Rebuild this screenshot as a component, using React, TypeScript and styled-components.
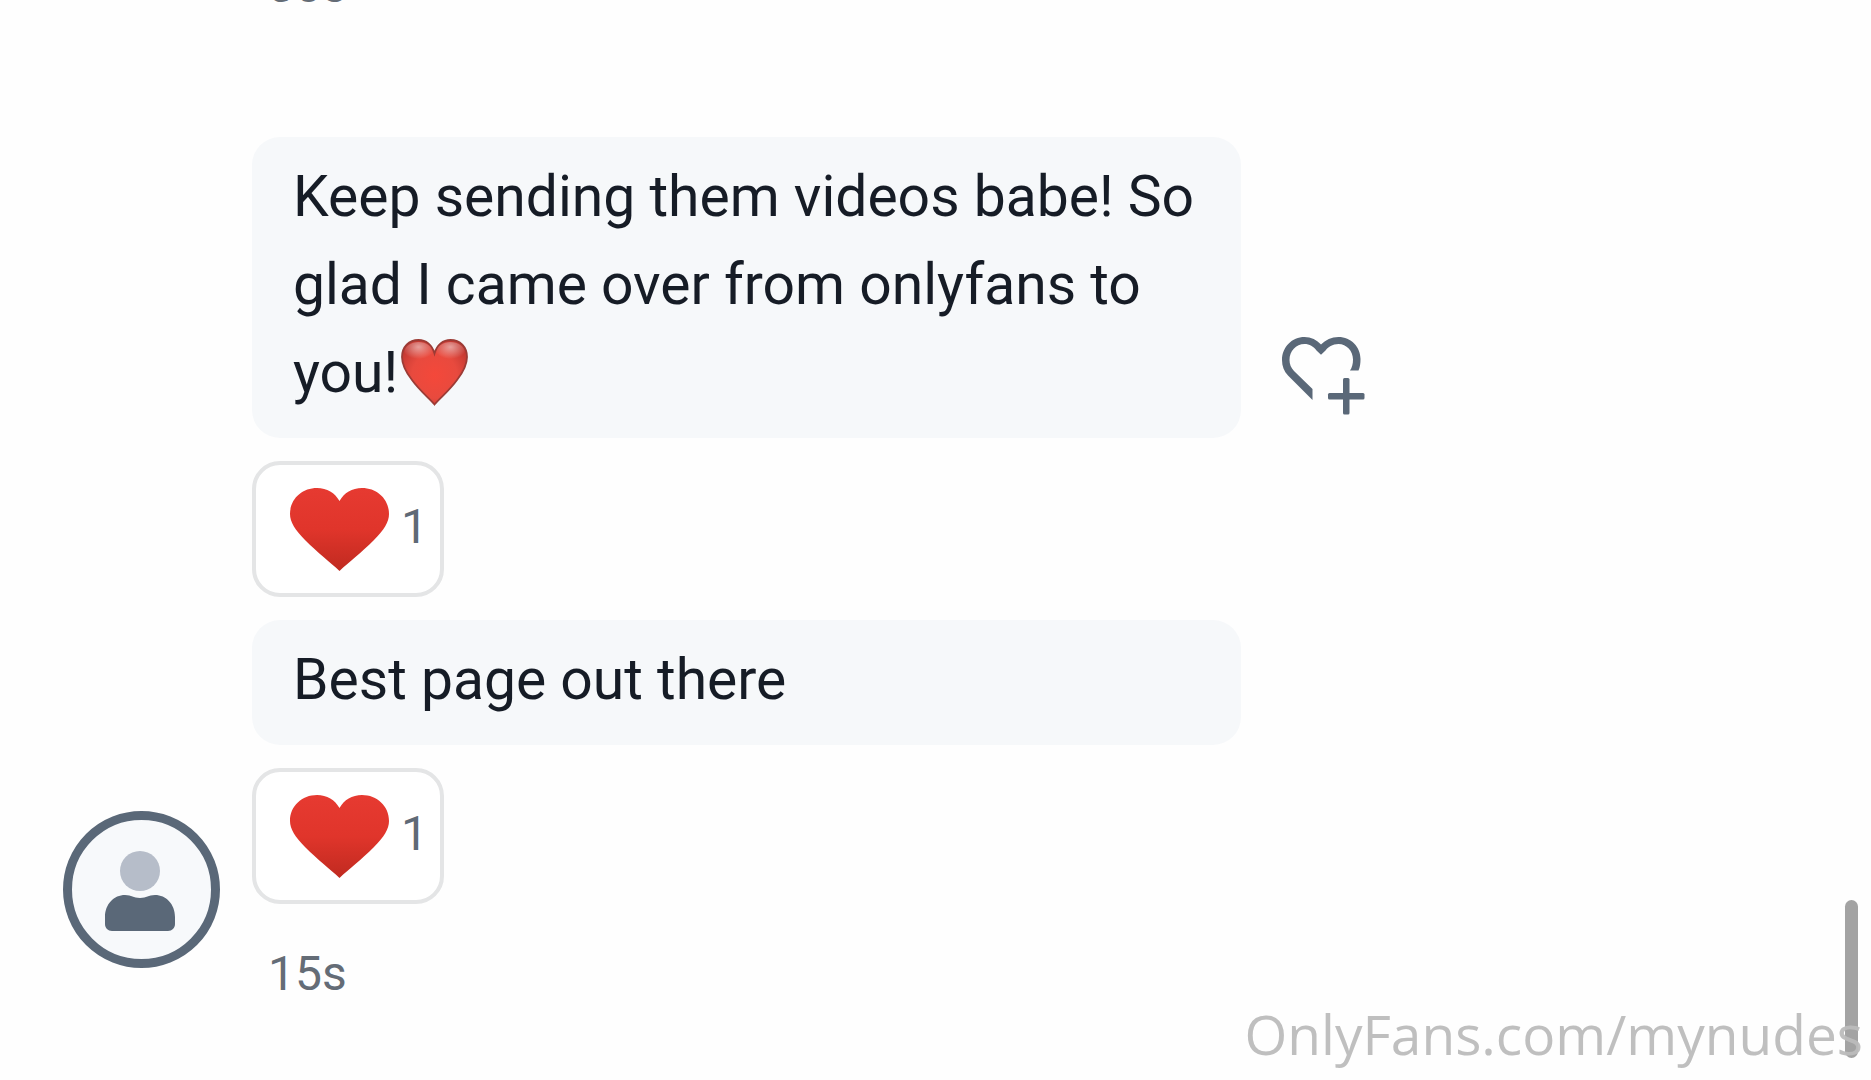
import React from "react";
import styled, { createGlobalStyle } from "styled-components";

const GlobalStyle = createGlobalStyle`
  * { box-sizing: border-box; }
  body {
    margin: 0;
    background: #fefefe;
    color: #161c26;
    font-family: Roboto, "Noto Sans", sans-serif;
  }
`;

const Thread = styled.main`
  position: relative;
  display: flex;
  flex-direction: column;
  justify-content: flex-end;
  gap: 119px;
  height: 100vh;
  padding: 0 64px 74px 63px;
  overflow: hidden;
`;

const Group = styled.section`
  display: flex;
  align-items: flex-end;
  gap: 32px;
`;

const AvatarSlot = styled.div`
  flex: 0 0 157px;
  padding-bottom: 38px;
`;

const AvatarLink = styled.a`
  display: flex;
  align-items: center;
  justify-content: center;
  height: 157px;
  padding-top: 4px;
  padding-right: 3px;
  border: 9px solid #5a6878;
  border-radius: 50%;
  background: #f7f9fb;
`;

const Messages = styled.div`
  flex: 1;
  min-width: 0;
  display: flex;
  flex-direction: column;
  gap: 23px;
`;

const Row = styled.div`
  display: flex;
  align-items: flex-end;
  gap: 41px;
`;

const Bubble = styled.p`
  flex: 0 1 989px;
  margin: 0;
  padding: 16px 41px 21px;
  border-radius: 28px;
  background: #f6f8fa;
  font-size: 57px;
  line-height: 88px;
`;

const InlineEmoji = styled.svg`
  width: 67px;
  height: 67px;
  margin-left: 3px;
  vertical-align: -14px;
`;

const IconButton = styled.button`
  display: flex;
  flex: none;
  margin: 0 0 22px;
  padding: 0;
  border: 0;
  background: none;
  color: #5a6878;
`;

const Reaction = styled.button`
  display: flex;
  align-items: center;
  align-self: flex-start;
  gap: 12px;
  height: 136px;
  padding: 0 12px 0 34px;
  border: 4px solid #e4e5e6;
  border-radius: 28px;
  background: #ffffff;
  color: #5f6a76;
  font: inherit;
  font-size: 48px;
  line-height: 64px;
`;

const Count = styled.span`
  padding-bottom: 4px;
`;

const Time = styled.time`
  display: block;
  padding: 0 16px;
  color: #646c76;
  font-size: 48px;
  line-height: 64px;
`;

const LastTime = styled(Time)`
  margin-top: 15px;
`;

const ScrollThumb = styled.div`
  position: absolute;
  right: 13px;
  bottom: 22px;
  width: 13px;
  height: 158px;
  border-radius: 7px;
  background: #a3a3a3;
`;

const Watermark = styled.div`
  position: absolute;
  right: 8px;
  bottom: 2px;
  color: rgba(188, 188, 188, 0.95);
  font-family: "Open Sans", "Noto Sans", sans-serif;
  font-size: 55px;
  line-height: 88px;
  white-space: nowrap;
`;

function GlossyHeart() {
  const outline =
    "M33.5 65.5C28 59 19 52 11 41C4 32 1 25 1 18C1 8 8 1 17.5 1C25 1 31 6 33.5 14.5C36 6 42 1 49.5 1C59 1 66 8 66 18C66 25 63 32 56 41C48 52 39 59 33.5 65.5Z";
  return (
    <InlineEmoji viewBox="0 0 67 67" role="img" aria-label="red heart">
      <defs>
        <radialGradient id="glossFill" cx="50%" cy="55%" r="58%">
          <stop offset="0" stopColor="#f4483a" />
          <stop offset="0.6" stopColor="#e84a3e" />
          <stop offset="1" stopColor="#c53a33" />
        </radialGradient>
        <radialGradient id="glossShine" cx="50%" cy="25%" r="60%">
          <stop offset="0" stopColor="#fff" stopOpacity="0.5" />
          <stop offset="1" stopColor="#fff" stopOpacity="0" />
        </radialGradient>
      </defs>
      <path d={outline} fill="url(#glossFill)" stroke="#9c3b35" strokeWidth="1.8" />
      <ellipse cx="17.5" cy="13" rx="14" ry="10" fill="url(#glossShine)" />
      <ellipse cx="49.5" cy="13" rx="14" ry="10" fill="url(#glossShine)" />
    </InlineEmoji>
  );
}

function FlatHeart({ id }: { id: string }) {
  return (
    <svg width="99" height="83" viewBox="0 0 99 83" aria-hidden="true">
      <defs>
        <linearGradient id={id} x1="0" y1="0" x2="0" y2="1">
          <stop offset="0" stopColor="#e63a31" />
          <stop offset="0.5" stopColor="#e0352b" />
          <stop offset="1" stopColor="#c02a20" />
        </linearGradient>
      </defs>
      <path
        d="M49.5 83C40 74 28 65 15 52C5 42 0 34 0 26C0 11 12 0 27 0C37 0 45 5 49.5 13C54 5 62 0 72 0C87 0 99 11 99 26C99 34 94 42 84 52C71 65 59 74 49.5 83Z"
        fill={`url(#${id})`}
      />
    </svg>
  );
}

function AddReactionIcon() {
  return (
    <svg width="84" height="79" viewBox="0 0 84 79" fill="currentColor" aria-hidden="true">
      <path d="M30.5 63L6 38.5C2 34.5 0 29 0 23C0 10 10 0 22.5 0C29 0 35 3 39 7.5C43.5 3 49.5 0 56.5 0C69 0 78.5 10 78.5 22C78.5 26.5 78 30.5 76.5 33.5H68C70 30.5 71 27 71 22.5C71 14 64.5 7 56.5 7C50.5 7 46 10 43.5 13.5L39 17.7L34.5 13.5C31.5 9.5 27.5 7 22.5 7C14 7 7.5 14 7.5 23C7.5 27 9 31 12 34L30.5 52Z" />
      <rect x="46" y="56" width="36.5" height="6.5" rx="1.5" />
      <rect x="61" y="41" width="6.5" height="36.5" rx="1.5" />
    </svg>
  );
}

function PersonIcon() {
  return (
    <svg width="70" height="82" viewBox="0 0 70 82" aria-hidden="true">
      <circle cx="35" cy="20" r="20" fill="#b6bdc9" />
      <path
        d="M0 66C0 53 9 44 20 44C27 44 28 47 35 47C42 47 43 44 50 44C61 44 70 53 70 66V73C70 77 67 80 63 80H7C3 80 0 77 0 73Z"
        fill="#5a6878"
      />
    </svg>
  );
}

function HeartReaction({ id }: { id: string }) {
  return (
    <Reaction type="button" aria-label="Heart, 1 reaction">
      <FlatHeart id={id} />
      <Count>1</Count>
    </Reaction>
  );
}

export default function App() {
  return (
    <>
      <GlobalStyle />
      <Thread>
        <Group>
          <AvatarSlot />
          <Messages>
            <Time>30s</Time>
          </Messages>
        </Group>
        <Group>
          <AvatarSlot>
            <AvatarLink href="#profile" aria-label="Profile">
              <PersonIcon />
            </AvatarLink>
          </AvatarSlot>
          <Messages>
            <Row>
              <Bubble>
                Keep sending them videos babe! So glad I came over from onlyfans to you!
                <GlossyHeart />
              </Bubble>
              <IconButton type="button" aria-label="Add reaction">
                <AddReactionIcon />
              </IconButton>
            </Row>
            <HeartReaction id="reactionFirst" />
            <Row>
              <Bubble>Best page out there</Bubble>
            </Row>
            <HeartReaction id="reactionSecond" />
            <LastTime>15s</LastTime>
          </Messages>
        </Group>
        <ScrollThumb />
        <Watermark>OnlyFans.com/mynudes</Watermark>
      </Thread>
    </>
  );
}
